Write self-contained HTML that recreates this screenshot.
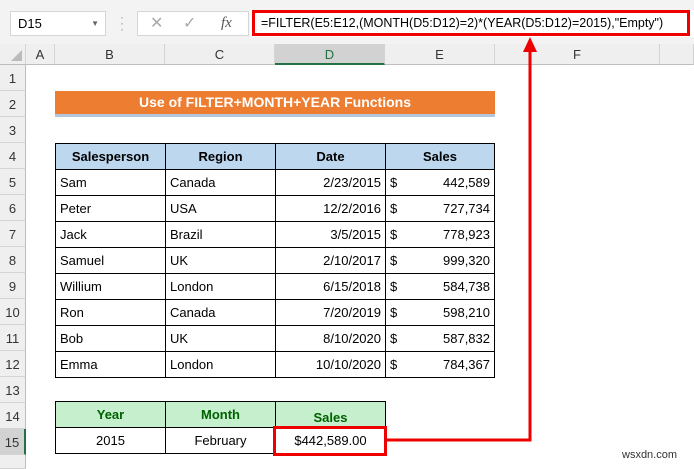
<!DOCTYPE html><html><head><style>
body{margin:0;width:694px;height:469px;overflow:hidden;background:#fff;font-family:"Liberation Sans",Arial,sans-serif;position:relative}
div{position:absolute;box-sizing:border-box}
.ch{top:44px;height:21px;background:#efefef;border-right:1px solid #d4d4d4;border-bottom:1px solid #bdbdbd;font-size:13px;text-align:center;line-height:21px;color:#333}
.rh{left:0;width:26px;height:26px;background:#efefef;border-bottom:1px solid #d4d4d4;border-right:1px solid #bdbdbd;font-size:13px;text-align:center;line-height:28px;color:#333}
.c{height:27px;border:1px solid #000;font-size:13px;line-height:26px;padding:0 4px;white-space:nowrap}
.h{background:#bdd7ee;font-weight:bold;text-align:center}
.g{background:#c6efce;font-weight:bold;color:#006100;text-align:center}
</style></head><body>
<div style="left:0;top:0;width:694px;height:44px;background:#f3f3f3"></div>
<div style="left:10px;top:11px;width:96px;height:25px;background:#fff;border:1px solid #d6d6d6;font-size:13px;line-height:23px;padding-left:7px">D15<span style="position:absolute;right:6px;top:0;font-size:8px;color:#666">▼</span></div>
<div style="left:120px;top:14px;width:4px;height:20px;color:#999;font-size:12px;line-height:6px">·<br>·<br>·</div>
<div style="left:137px;top:11px;width:112px;height:25px;background:#fff;border:1px solid #d6d6d6;font-size:16px;line-height:23px;color:#aaa"><span style="position:absolute;left:12px">✕</span><span style="position:absolute;left:45px">✓</span><span style="position:absolute;left:83px;color:#555;font-style:italic;font-family:'Liberation Serif',serif;font-size:15px">fx</span></div>
<div style="left:250px;top:10px;width:444px;height:27px;background:#fff"></div>
<div style="left:252px;top:10px;width:438px;height:26px;border:3px solid #e00;font-size:12.5px;line-height:20px;padding-left:6px;white-space:nowrap;overflow:hidden">=FILTER(E5:E12,(MONTH(D5:D12)=2)*(YEAR(D5:D12)=2015),"Empty")</div>
<div class="ch" style="left:0;width:26px"><span style="position:absolute;right:3px;bottom:3px;width:0;height:0;border-left:11px solid transparent;border-bottom:11px solid #bbb"></span></div>
<div class="ch" style="left:26px;width:29px">A</div>
<div class="ch" style="left:55px;width:110px">B</div>
<div class="ch" style="left:165px;width:110px">C</div>
<div class="ch" style="left:275px;width:110px;background:#d2d2d2;border-bottom:2px solid #217346;color:#217346">D</div>
<div class="ch" style="left:385px;width:110px">E</div>
<div class="ch" style="left:495px;width:165px">F</div>
<div class="ch" style="left:660px;width:34px"></div>
<div class="rh" style="top:65px">1</div><div class="rh" style="top:91px">2</div><div class="rh" style="top:117px">3</div>
<div class="rh" style="top:143px">4</div><div class="rh" style="top:169px">5</div><div class="rh" style="top:195px">6</div>
<div class="rh" style="top:221px">7</div><div class="rh" style="top:247px">8</div><div class="rh" style="top:273px">9</div>
<div class="rh" style="top:299px">10</div><div class="rh" style="top:325px">11</div><div class="rh" style="top:351px">12</div>
<div class="rh" style="top:377px">13</div><div class="rh" style="top:403px">14</div>
<div class="rh" style="top:429px;background:#d2d2d2;border-right:2px solid #217346">15</div>
<div class="rh" style="top:455px;height:14px"></div>
<div style="left:55px;top:91px;width:440px;height:23px;background:#ed7d31;color:#fff;font-weight:bold;font-size:14px;text-align:center;line-height:23px">Use of FILTER+MONTH+YEAR Functions</div>
<div style="left:55px;top:114px;width:440px;height:3px;background:#b4c6dc"></div>

<div class="c h" style="left:55px;top:143px;width:111px">Salesperson</div>
<div class="c h" style="left:165px;top:143px;width:111px">Region</div>
<div class="c h" style="left:275px;top:143px;width:111px">Date</div>
<div class="c h" style="left:385px;top:143px;width:110px">Sales</div>
<div class="c" style="left:55px;top:169px;width:111px">Sam</div><div class="c" style="left:165px;top:169px;width:111px">Canada</div><div class="c" style="left:275px;top:169px;width:111px;text-align:right">2/23/2015</div><div class="c" style="left:385px;top:169px;width:110px;text-align:right"><span style="float:left">$</span>442,589</div>
<div class="c" style="left:55px;top:195px;width:111px">Peter</div><div class="c" style="left:165px;top:195px;width:111px">USA</div><div class="c" style="left:275px;top:195px;width:111px;text-align:right">12/2/2016</div><div class="c" style="left:385px;top:195px;width:110px;text-align:right"><span style="float:left">$</span>727,734</div>
<div class="c" style="left:55px;top:221px;width:111px">Jack</div><div class="c" style="left:165px;top:221px;width:111px">Brazil</div><div class="c" style="left:275px;top:221px;width:111px;text-align:right">3/5/2015</div><div class="c" style="left:385px;top:221px;width:110px;text-align:right"><span style="float:left">$</span>778,923</div>
<div class="c" style="left:55px;top:247px;width:111px">Samuel</div><div class="c" style="left:165px;top:247px;width:111px">UK</div><div class="c" style="left:275px;top:247px;width:111px;text-align:right">2/10/2017</div><div class="c" style="left:385px;top:247px;width:110px;text-align:right"><span style="float:left">$</span>999,320</div>
<div class="c" style="left:55px;top:273px;width:111px">Willium</div><div class="c" style="left:165px;top:273px;width:111px">London</div><div class="c" style="left:275px;top:273px;width:111px;text-align:right">6/15/2018</div><div class="c" style="left:385px;top:273px;width:110px;text-align:right"><span style="float:left">$</span>584,738</div>
<div class="c" style="left:55px;top:299px;width:111px">Ron</div><div class="c" style="left:165px;top:299px;width:111px">Canada</div><div class="c" style="left:275px;top:299px;width:111px;text-align:right">7/20/2019</div><div class="c" style="left:385px;top:299px;width:110px;text-align:right"><span style="float:left">$</span>598,210</div>
<div class="c" style="left:55px;top:325px;width:111px">Bob</div><div class="c" style="left:165px;top:325px;width:111px">UK</div><div class="c" style="left:275px;top:325px;width:111px;text-align:right">8/10/2020</div><div class="c" style="left:385px;top:325px;width:110px;text-align:right"><span style="float:left">$</span>587,832</div>
<div class="c" style="left:55px;top:351px;width:111px">Emma</div><div class="c" style="left:165px;top:351px;width:111px">London</div><div class="c" style="left:275px;top:351px;width:111px;text-align:right">10/10/2020</div><div class="c" style="left:385px;top:351px;width:110px;text-align:right"><span style="float:left">$</span>784,367</div>

<div class="c g" style="left:55px;top:401px;width:111px">Year</div>
<div class="c g" style="left:165px;top:401px;width:111px">Month</div>
<div class="c g" style="left:275px;top:401px;width:111px;line-height:32px">Sales</div>
<div class="c" style="left:55px;top:427px;width:111px;text-align:center">2015</div>
<div class="c" style="left:165px;top:427px;width:111px;text-align:center">February</div>
<div class="c" style="left:275px;top:427px;width:111px;text-align:center">$442,589.00</div>
<div style="left:273px;top:426px;width:114px;height:30px;border:3px solid #e00"></div>
<svg style="position:absolute;left:0;top:0" width="694" height="469"><path d="M386 440H530V46" fill="none" stroke="#e00" stroke-width="3"/><path d="M523 52L530 37L537 52Z" fill="#e00"/></svg>
<div style="left:622px;top:449px;font-size:11px;color:#333">wsxdn.com</div>
</body></html>
